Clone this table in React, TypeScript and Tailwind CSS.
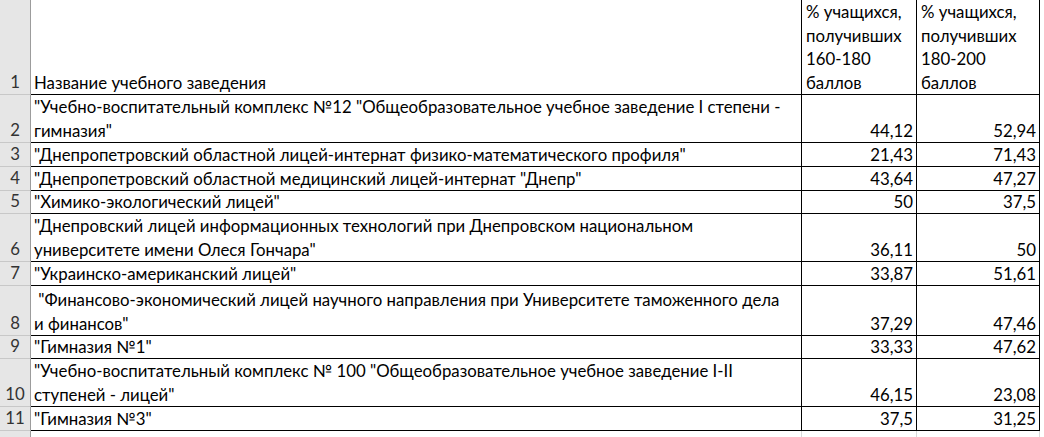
const rows: { h: string; name: string[]; b: string; c: string }[] = [
  {
    h: "h-[48px]",
    name: [
      '"Учебно-воспитательный комплекс №12 "Общеобразовательное учебное заведение I степени -',
      'гимназия"',
    ],
    b: "44,12",
    c: "52,94",
  },
  {
    h: "h-[24px]",
    name: ['"Днепропетровский областной лицей-интернат физико-математического профиля"'],
    b: "21,43",
    c: "71,43",
  },
  {
    h: "h-[24px]",
    name: ['"Днепропетровский областной медицинский лицей-интернат "Днепр"'],
    b: "43,64",
    c: "47,27",
  },
  { h: "h-[23px]", name: ['"Химико-экологический лицей"'], b: "50", c: "37,5" },
  {
    h: "h-[48px]",
    name: [
      '"Днепровский лицей информационных технологий при Днепровском национальном',
      'университете имени Олеся Гончара"',
    ],
    b: "36,11",
    c: "50",
  },
  { h: "h-[24px]", name: ['"Украинско-американский лицей"'], b: "33,87", c: "51,61" },
  {
    h: "h-[50px]",
    name: [
      '\u00a0"Финансово-экономический лицей научного направления при Университете таможенного дела',
      'и финансов"',
    ],
    b: "37,29",
    c: "47,46",
  },
  { h: "h-[23px]", name: ['"Гимназия №1"'], b: "33,33", c: "47,62" },
  {
    h: "h-[48px]",
    name: [
      '"Учебно-воспитательный комплекс № 100 "Общеобразовательное учебное заведение I-II',
      'ступеней - лицей"',
    ],
    b: "46,15",
    c: "23,08",
  },
  { h: "h-[24px]", name: ['"Гимназия №3"'], b: "37,5", c: "31,25" },
];

const Head = ({ n, h, last }: { n: string; h: string; last?: boolean }) => (
  <div
    className={`${h} w-[31px] shrink-0 bg-[#e6e6e6] border-r border-[#9c9c9c] flex items-end justify-center pb-[1px] text-[#333] ${
      last ? "" : "border-b border-b-[#c8c8c8]"
    }`}
  >
    <span className="leading-[23px]">{n}</span>
  </div>
);

export default function App() {
  return (
    <div
      className="w-[1044px] h-[437px] overflow-hidden bg-white text-[16.8px] text-black"
      style={{ fontFamily: "Lato, 'Liberation Sans', sans-serif" }}
    >
      {/* header row */}
      <div className="flex">
        <Head n="1" h="h-[95px]" />
        <div className="h-[95px] w-[771px] border-r border-b border-black flex items-end px-[3px]">
          <span className="leading-[23.5px]">Название учебного заведения</span>
        </div>
        <div className="h-[95px] w-[115px] border-r border-b border-black flex flex-col justify-end px-[4px] leading-[23.5px]">
          <span>% учащихся,</span>
          <span>получивших</span>
          <span>160-180</span>
          <span>баллов</span>
        </div>
        <div className="h-[95px] w-[123px] border-r border-b border-black flex flex-col justify-end px-[4px] leading-[23.5px]">
          <span>% учащихся,</span>
          <span>получивших</span>
          <span>180-200</span>
          <span>баллов</span>
        </div>
      </div>

      {rows.map((r, i) => (
        <div key={i} className="flex">
          <Head n={String(i + 2)} h={r.h} />
          <div className={`${r.h} w-[771px] border-r border-b border-black flex flex-col justify-end px-[3px] leading-[23.5px] whitespace-nowrap`}>
            {r.name.map((l, j) => (
              <span key={j}>{l}</span>
            ))}
          </div>
          <div className={`${r.h} w-[115px] border-r border-b border-black flex items-end justify-end px-[3px] leading-[23.5px]`}>
            {r.b}
          </div>
          <div className={`${r.h} w-[123px] border-r border-b border-black flex items-end justify-end px-[3px] leading-[23.5px]`}>
            {r.c}
          </div>
        </div>
      ))}

      {/* partial next row */}
      <div className="flex">
        <Head n="" h="h-[24px]" last />
        <div className="h-[24px] w-[771px] border-r border-[#d9d9d9]" />
        <div className="h-[24px] w-[115px] border-r border-[#d9d9d9]" />
        <div className="h-[24px] w-[123px] border-r border-[#d9d9d9]" />
      </div>
    </div>
  );
}
